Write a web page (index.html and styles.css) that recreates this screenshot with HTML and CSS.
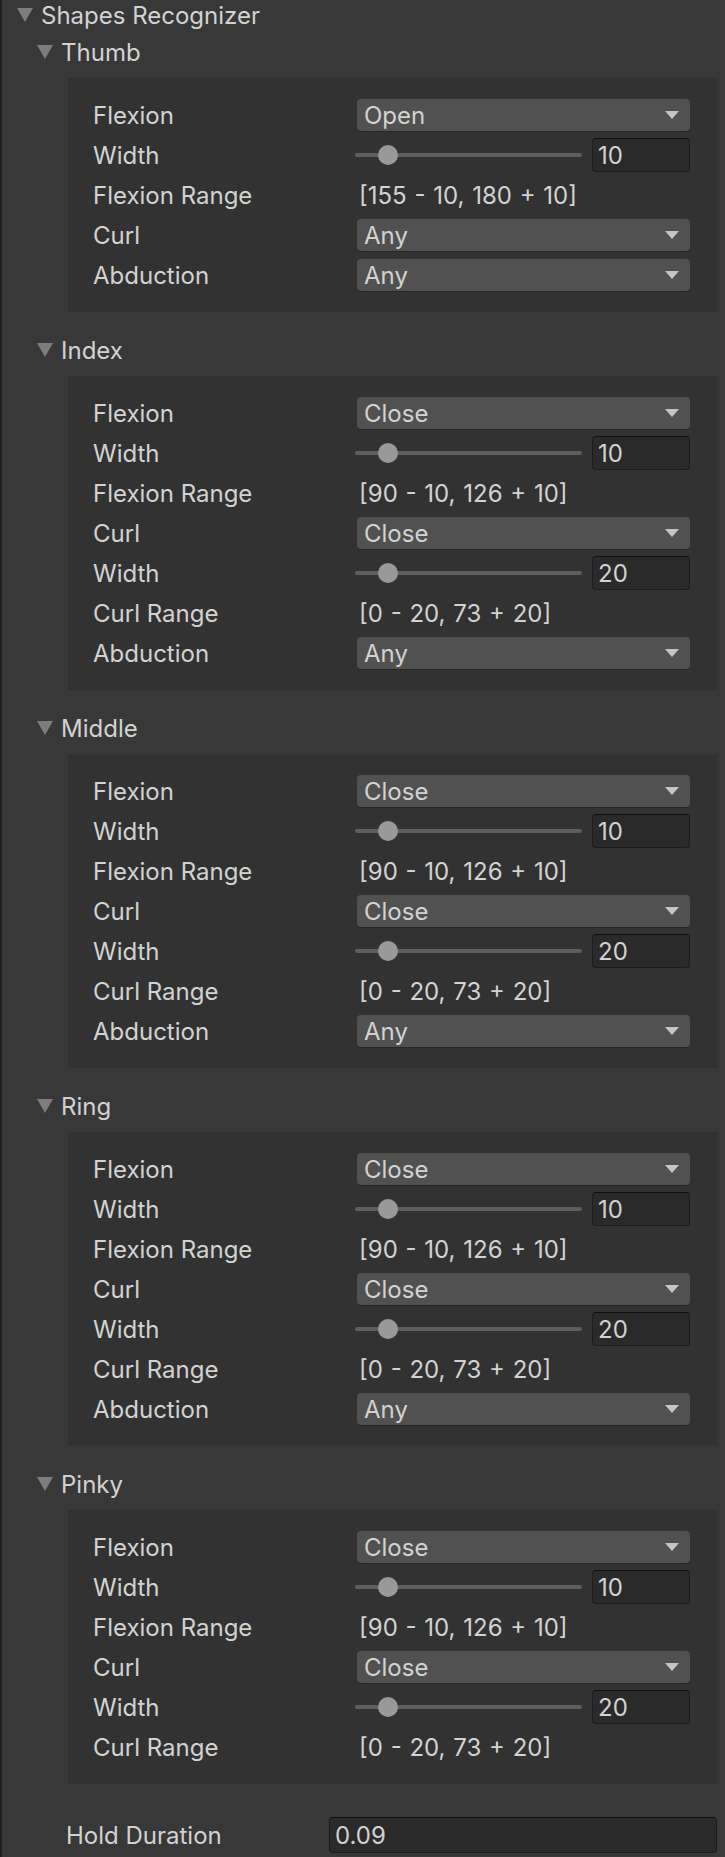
FILE: index.html
```html
<!DOCTYPE html>
<html>
<head>
<meta charset="utf-8">
<link rel="stylesheet" href="styles.css">
</head>
<body>
<div class="inspector">
  <div class="root-header"><span class="fold"></span><span>Shapes Recognizer</span></div>

  <div class="section first">
    <div class="sec-header"><span class="fold"></span><span>Thumb</span></div>
    <div class="box">
      <div class="row"><span class="label">Flexion</span><div class="dropdown"><span>Open</span><span class="arrow"></span></div></div>
      <div class="row"><span class="label">Width</span><div class="slider"><div class="track"><span class="knob"></span></div><div class="field">10</div></div></div>
      <div class="row"><span class="label">Flexion Range</span><span class="value">[155 - 10, 180 + 10]</span></div>
      <div class="row"><span class="label">Curl</span><div class="dropdown"><span>Any</span><span class="arrow"></span></div></div>
      <div class="row"><span class="label">Abduction</span><div class="dropdown"><span>Any</span><span class="arrow"></span></div></div>
    </div>
  </div>

  <div class="section">
    <div class="sec-header"><span class="fold"></span><span>Index</span></div>
    <div class="box">
      <div class="row"><span class="label">Flexion</span><div class="dropdown"><span>Close</span><span class="arrow"></span></div></div>
      <div class="row"><span class="label">Width</span><div class="slider"><div class="track"><span class="knob"></span></div><div class="field">10</div></div></div>
      <div class="row"><span class="label">Flexion Range</span><span class="value">[90 - 10, 126 + 10]</span></div>
      <div class="row"><span class="label">Curl</span><div class="dropdown"><span>Close</span><span class="arrow"></span></div></div>
      <div class="row"><span class="label">Width</span><div class="slider"><div class="track"><span class="knob"></span></div><div class="field">20</div></div></div>
      <div class="row"><span class="label">Curl Range</span><span class="value">[0 - 20, 73 + 20]</span></div>
      <div class="row"><span class="label">Abduction</span><div class="dropdown"><span>Any</span><span class="arrow"></span></div></div>
    </div>
  </div>

  <div class="section">
    <div class="sec-header"><span class="fold"></span><span>Middle</span></div>
    <div class="box">
      <div class="row"><span class="label">Flexion</span><div class="dropdown"><span>Close</span><span class="arrow"></span></div></div>
      <div class="row"><span class="label">Width</span><div class="slider"><div class="track"><span class="knob"></span></div><div class="field">10</div></div></div>
      <div class="row"><span class="label">Flexion Range</span><span class="value">[90 - 10, 126 + 10]</span></div>
      <div class="row"><span class="label">Curl</span><div class="dropdown"><span>Close</span><span class="arrow"></span></div></div>
      <div class="row"><span class="label">Width</span><div class="slider"><div class="track"><span class="knob"></span></div><div class="field">20</div></div></div>
      <div class="row"><span class="label">Curl Range</span><span class="value">[0 - 20, 73 + 20]</span></div>
      <div class="row"><span class="label">Abduction</span><div class="dropdown"><span>Any</span><span class="arrow"></span></div></div>
    </div>
  </div>

  <div class="section">
    <div class="sec-header"><span class="fold"></span><span>Ring</span></div>
    <div class="box">
      <div class="row"><span class="label">Flexion</span><div class="dropdown"><span>Close</span><span class="arrow"></span></div></div>
      <div class="row"><span class="label">Width</span><div class="slider"><div class="track"><span class="knob"></span></div><div class="field">10</div></div></div>
      <div class="row"><span class="label">Flexion Range</span><span class="value">[90 - 10, 126 + 10]</span></div>
      <div class="row"><span class="label">Curl</span><div class="dropdown"><span>Close</span><span class="arrow"></span></div></div>
      <div class="row"><span class="label">Width</span><div class="slider"><div class="track"><span class="knob"></span></div><div class="field">20</div></div></div>
      <div class="row"><span class="label">Curl Range</span><span class="value">[0 - 20, 73 + 20]</span></div>
      <div class="row"><span class="label">Abduction</span><div class="dropdown"><span>Any</span><span class="arrow"></span></div></div>
    </div>
  </div>

  <div class="section">
    <div class="sec-header"><span class="fold"></span><span>Pinky</span></div>
    <div class="box">
      <div class="row"><span class="label">Flexion</span><div class="dropdown"><span>Close</span><span class="arrow"></span></div></div>
      <div class="row"><span class="label">Width</span><div class="slider"><div class="track"><span class="knob"></span></div><div class="field">10</div></div></div>
      <div class="row"><span class="label">Flexion Range</span><span class="value">[90 - 10, 126 + 10]</span></div>
      <div class="row"><span class="label">Curl</span><div class="dropdown"><span>Close</span><span class="arrow"></span></div></div>
      <div class="row"><span class="label">Width</span><div class="slider"><div class="track"><span class="knob"></span></div><div class="field">20</div></div></div>
      <div class="row"><span class="label">Curl Range</span><span class="value">[0 - 20, 73 + 20]</span></div>
    </div>
  </div>

  <div class="hold-row">
    <span class="hold-label">Hold Duration</span>
    <div class="hold-field">0.09</div>
  </div>
</div>
</body>
</html>
```

FILE: styles.css
```css
html, body {
  margin: 0;
  padding: 0;
  background: #383838;
}
body {
  width: 725px;
  height: 1857px;
  overflow: hidden;
  font-family: "Inter", "Noto Sans", sans-serif;
  font-size: 24px;
  color: #d2d2d2;
}
.inspector {
  box-sizing: border-box;
  height: 1857px;
  border-left: 2px solid #1f1f1f;
  border-right: 5px solid #3b3b3b;
}
.root-header {
  height: 30px;
  display: flex;
  align-items: center;
  padding-left: 15px;
  gap: 8px;
}
.fold {
  width: 0;
  height: 0;
  border-left: 8px solid transparent;
  border-right: 8px solid transparent;
  border-top: 14px solid #7d7d7d;
}
.section {
  margin-top: 18px;
}
.section.first {
  margin-top: 2px;
}
.sec-header {
  height: 40px;
  display: flex;
  align-items: center;
  padding-left: 35px;
  gap: 8px;
}
.box {
  margin: 6px 2px 0 66px;
  background: #323232;
  padding: 17px 26px 17px 25px;
}
.row {
  height: 40px;
  display: grid;
  grid-template-columns: 264px 333px;
  align-items: center;
}
.label {
  white-space: nowrap;
}
.value {
  padding-left: 2px;
  word-spacing: 1px;
  white-space: nowrap;
}
.dropdown {
  height: 32px;
  background: #515151;
  border-radius: 4px;
  box-shadow: 0 1px 0 #262626;
  display: flex;
  align-items: center;
  justify-content: space-between;
  padding: 0 11px 0 7px;
}
.arrow {
  width: 0;
  height: 0;
  border-left: 7px solid transparent;
  border-right: 7px solid transparent;
  border-top: 8px solid #c4c4c4;
}
.slider {
  display: flex;
  align-items: center;
  gap: 10px;
}
.track {
  flex: 1;
  margin-left: -2px;
  height: 4px;
  border-radius: 2px;
  background: #5e5e5e;
  position: relative;
}
.knob {
  position: absolute;
  left: 23px;
  top: -8px;
  width: 20px;
  height: 20px;
  border-radius: 50%;
  background: #999999;
}
.field {
  box-sizing: border-box;
  width: 98px;
  height: 34px;
  background: #2a2a2a;
  border: 1px solid #1c1c1c;
  border-top-color: #0f0f0f;
  border-radius: 4px;
  display: flex;
  align-items: center;
  padding-left: 5px;
}
.hold-row {
  margin-top: 33px;
  height: 36px;
  display: flex;
  align-items: center;
}
.hold-label {
  width: 263px;
  padding-left: 64px;
  white-space: nowrap;
}
.hold-field {
  box-sizing: border-box;
  width: 388px;
  height: 36px;
  background: #2a2a2a;
  border: 1px solid #1c1c1c;
  border-top-color: #0f0f0f;
  border-radius: 4px;
  display: flex;
  align-items: center;
  padding-left: 5px;
}
```
